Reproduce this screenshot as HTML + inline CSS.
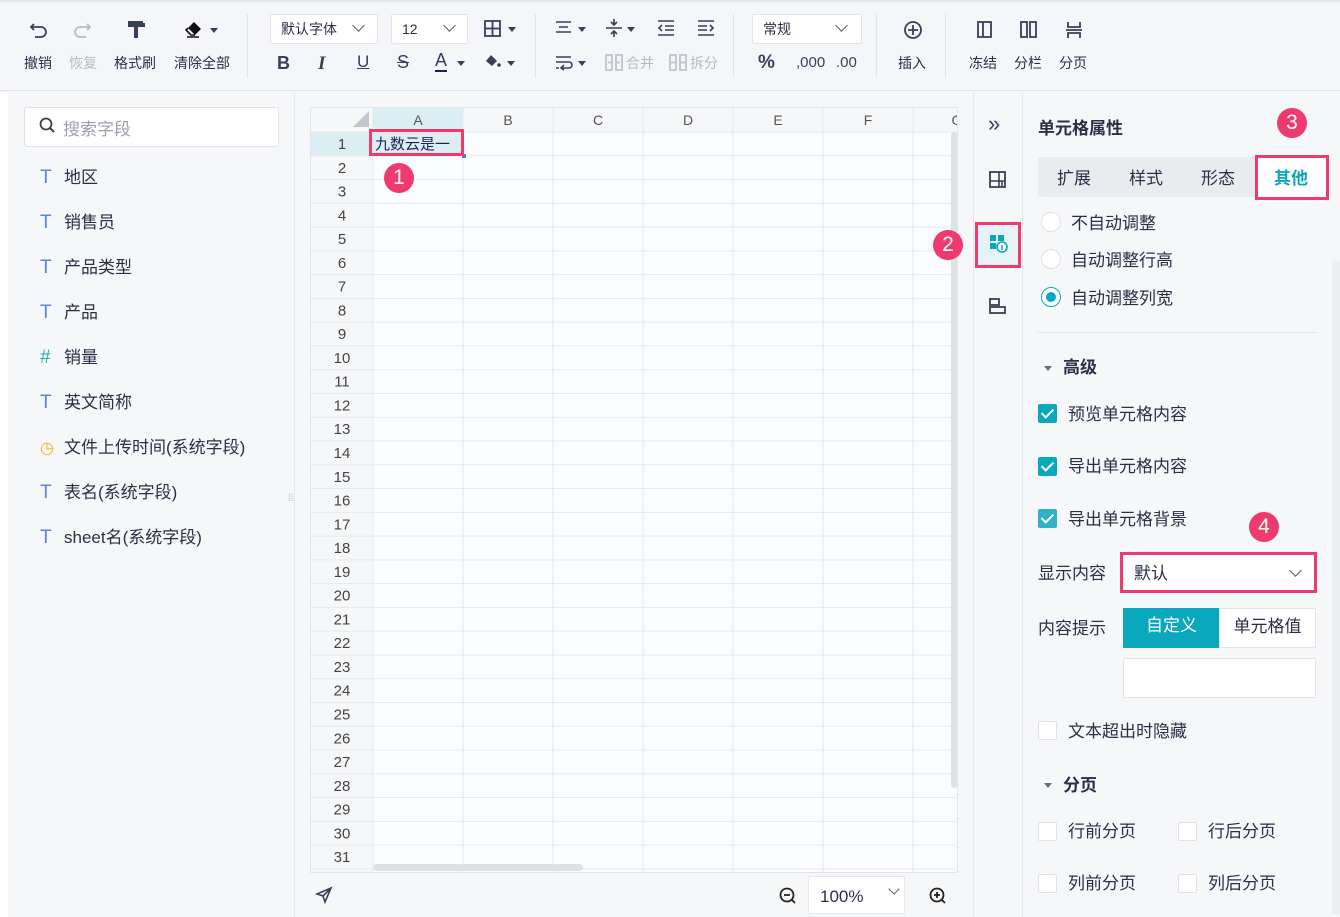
<!DOCTYPE html>
<html><head><meta charset="utf-8"><style>
*{box-sizing:border-box;margin:0;padding:0}
body{width:1340px;height:917px;position:relative;overflow:hidden;background:#f6f7f9;font-family:"Liberation Sans","Noto Sans CJK SC",sans-serif;color:#2b2f45;font-size:16px}
.a{position:absolute}
.tb{left:0;top:0;width:1340px;height:91px;background:#f5f6f9;border-top:2px solid #e6e7ea;border-bottom:1px solid #e2e4e8}
.lbl{font-size:14px;color:#2b2f45;position:absolute}
.sel{position:absolute;background:#fff;border:1px solid #e2e4e8;border-radius:2px;font-size:14px;padding:0 10px;line-height:28px}
.sep{position:absolute;width:1px;background:#e2e4e8;top:14px;height:64px}
.ic{position:absolute;font-size:16px;color:#3a3f58}
.chev{position:absolute;width:9px;height:9px;border-right:1.5px solid #555a70;border-bottom:1.5px solid #555a70;transform:rotate(45deg)}
.tri{position:absolute;width:0;height:0;border-left:4px solid transparent;border-right:4px solid transparent;border-top:5px solid #3a3f58}
.fld{position:absolute;left:40px;font-size:17px}
.fld b{font-weight:normal;color:#5b86d6;display:inline-block;width:24px;font-size:19px}
.badge{position:absolute;width:30px;height:30px;border-radius:50%;background:#ee3a6c;color:#fff;font-size:21px;text-align:center;line-height:30px}
.pink{position:absolute;border:3px solid #ee3a6c}
.cb{position:absolute;width:19px;height:19px;border-radius:2px;background:#fff;border:1px solid #dfe1e6}
.cb.on{background:#0aa8bd;border-color:#0aa8bd}
.cb.on:after{content:"";position:absolute;left:5px;top:1px;width:5px;height:10px;border-right:2px solid #fff;border-bottom:2px solid #fff;transform:rotate(45deg)}
.t{position:absolute;font-size:17px;color:#2b2f45}
.rd{position:absolute;width:20px;height:20px;border-radius:50%;background:#fff;border:1px solid #dfe1e6}
</style></head><body>
<div class="a tb"></div>
<svg class="a" style="left:28px;top:20px" width="22" height="20" viewBox="0 0 22 20"><path d="M6 4 L3 7 L6 10 M3 7 H13 a5 5 0 0 1 0 10 H7" fill="none" stroke="#3a3f58" stroke-width="1.8"/></svg>
<svg class="a" style="left:72px;top:20px" width="22" height="20" viewBox="0 0 22 20"><path d="M15 4 L18 7 L15 10 M18 7 H8 a5 5 0 0 0 0 10 H14" fill="none" stroke="#b7bac4" stroke-width="1.8"/></svg>
<svg class="a" style="left:126px;top:20px" width="20" height="20" viewBox="0 0 20 20"><rect x="2" y="1" width="15" height="6" fill="#3a3f58"/><rect x="17" y="3" width="2" height="4" fill="#3a3f58"/><rect x="8" y="7" width="4" height="2" fill="#3a3f58"/><rect x="8" y="9" width="4" height="9" fill="#3a3f58"/></svg>
<svg class="a" style="left:185px;top:20px" width="22" height="20" viewBox="0 0 22 20"><path d="M9 2 L16 9 L10 15 L3 8 Z" fill="#111"/><path d="M3 8 L1 10 L6 15 L10 15" fill="none" stroke="#111" stroke-width="1.6"/><line x1="2" y1="17" x2="14" y2="17" stroke="#111" stroke-width="1.5"/></svg>
<div class="tri" style="left:210px;top:28px"></div>
<div class="lbl" style="left:24px;top:53px">撤销</div>
<div class="lbl" style="left:69px;top:53px;color:#b7bac4">恢复</div>
<div class="lbl" style="left:114px;top:53px">格式刷</div>
<div class="lbl" style="left:174px;top:53px">清除全部</div>
<div class="sep" style="left:247px"></div>
<div class="sel" style="left:270px;top:14px;width:108px;height:30px">默认字体</div><div class="chev" style="left:354px;top:21px"></div>
<div class="sel" style="left:391px;top:14px;width:77px;height:30px">12</div><div class="chev" style="left:445px;top:21px"></div>
<svg class="a" style="left:484px;top:20px" width="18" height="18" viewBox="0 0 18 18"><rect x="1" y="1" width="15" height="15" fill="none" stroke="#3a3f58" stroke-width="1.8"/><line x1="8.5" y1="1" x2="8.5" y2="16" stroke="#3a3f58" stroke-width="1.8"/><line x1="1" y1="8.5" x2="16" y2="8.5" stroke="#3a3f58" stroke-width="1.8"/></svg><div class="tri" style="left:508px;top:27px"></div>
<div class="ic" style="left:277px;top:53px;font-size:18px;font-weight:bold">B</div>
<div class="ic" style="left:318px;top:53px;font-size:19px;font-style:italic;font-family:'Liberation Serif',serif;font-weight:bold">I</div>
<div class="ic" style="left:357px;top:52px;font-size:17px;text-decoration:underline">U</div>
<div class="ic" style="left:397px;top:52px;font-size:18px;text-decoration:line-through">S</div>
<div class="ic" style="left:435px;top:50px;font-size:18px;border-bottom:2px solid #1e2450;line-height:20px">A</div><div class="tri" style="left:457px;top:61px"></div>
<svg class="a" style="left:484px;top:53px" width="18" height="18" viewBox="0 0 18 18"><path d="M7 2 L13 8 L8 13 L2 8 Z" fill="#3a3f58"/><circle cx="15" cy="12" r="1.8" fill="#3a3f58"/></svg><div class="tri" style="left:507px;top:61px"></div>
<div class="sep" style="left:535px"></div>
<svg class="a" style="left:555px;top:20px" width="18" height="16"><path d="M1 2H16M4 7H13M1 12H16" stroke="#3a3f58" stroke-width="1.6"/></svg><div class="tri" style="left:578px;top:27px"></div>
<svg class="a" style="left:605px;top:18px" width="18" height="20"><path d="M1 10H17M9 1V7M6 4L9 7L12 4M9 19V13M6 16L9 13L12 16" stroke="#3a3f58" stroke-width="1.6" fill="none"/></svg><div class="tri" style="left:627px;top:27px"></div>
<svg class="a" style="left:657px;top:20px" width="18" height="16"><path d="M1 1H17M8 6H17M8 10H17M1 15H17M5 5L2 8L5 11" stroke="#3a3f58" stroke-width="1.6" fill="none"/></svg>
<svg class="a" style="left:697px;top:20px" width="18" height="16"><path d="M1 1H17M1 6H10M1 10H10M1 15H17M13 5L16 8L13 11" stroke="#3a3f58" stroke-width="1.6" fill="none"/></svg>
<svg class="a" style="left:555px;top:55px" width="18" height="16"><path d="M1 2H16M1 7H14a3 3 0 0 1 0 6H7M9 10L6 13L9 15M1 13H4" stroke="#3a3f58" stroke-width="1.6" fill="none"/></svg><div class="tri" style="left:578px;top:61px"></div>
<svg class="a" style="left:605px;top:54px" width="18" height="17"><path d="M1 1H7V16H1ZM11 1H17V16H11ZM3 8.5H6M12 8.5H15" fill="none" stroke="#c0c3cb" stroke-width="1.8"/></svg>
<div class="lbl" style="left:626px;top:53px;color:#b7bac4">合并</div>
<svg class="a" style="left:669px;top:54px" width="18" height="17"><path d="M1 1H7V16H1ZM11 1H17V16H11ZM1 8.5H7M11 8.5H17" fill="none" stroke="#c0c3cb" stroke-width="1.8"/></svg>
<div class="lbl" style="left:690px;top:53px;color:#b7bac4">拆分</div>
<div class="sep" style="left:733px"></div>
<div class="sel" style="left:752px;top:14px;width:110px;height:30px">常规</div><div class="chev" style="left:837px;top:21px"></div>
<div class="ic" style="left:758px;top:52px;font-size:19px;font-weight:bold">%</div>
<div class="ic" style="left:796px;top:54px;font-size:15px">,000</div>
<div class="ic" style="left:836px;top:54px;font-size:15px">.00</div>
<div class="sep" style="left:876px"></div>
<svg class="a" style="left:903px;top:20px" width="20" height="20"><circle cx="10" cy="10" r="8" fill="none" stroke="#3a3f58" stroke-width="1.8"/><path d="M10 5V15M5 10H15" stroke="#3a3f58" stroke-width="1.8"/></svg>
<div class="lbl" style="left:898px;top:53px">插入</div>
<div class="sep" style="left:945px"></div>
<svg class="a" style="left:977px;top:21px" width="16" height="18"><rect x="1" y="1" width="13" height="15" fill="none" stroke="#3a3f58" stroke-width="1.8"/><line x1="6" y1="1" x2="6" y2="16" stroke="#3a3f58" stroke-width="1.8"/></svg>
<svg class="a" style="left:1020px;top:21px" width="18" height="18"><rect x="1" y="1" width="6" height="15" fill="none" stroke="#3a3f58" stroke-width="1.8"/><rect x="10" y="1" width="6" height="15" fill="none" stroke="#3a3f58" stroke-width="1.8"/></svg>
<svg class="a" style="left:1065px;top:21px" width="18" height="18"><path d="M3 1V6H15V1M1 9H17M3 17V12H15V17" fill="none" stroke="#3a3f58" stroke-width="1.8"/></svg>
<div class="lbl" style="left:969px;top:53px">冻结</div>
<div class="lbl" style="left:1014px;top:53px">分栏</div>
<div class="lbl" style="left:1059px;top:53px">分页</div>

<div class="a" style="left:0;top:92px;width:8px;height:825px;background:#fff"></div>
<div class="a" style="left:294px;top:92px;width:1px;height:825px;background:#e6e7ea"></div>
<div class="a" style="left:24px;top:107px;width:255px;height:40px;background:#fff;border:1px solid #dfe1e6;border-radius:3px"></div>
<svg class="a" style="left:39px;top:117px" width="18" height="18"><circle cx="7" cy="7" r="5.5" fill="none" stroke="#3a3f58" stroke-width="1.8"/><line x1="11" y1="11" x2="15" y2="15" stroke="#3a3f58" stroke-width="2"/></svg>
<div class="a" style="left:63px;top:115px;font-size:17px;color:#9aa0ad">搜索字段</div>
<div class="fld" style="top:163px"><b>T</b>地区</div>
<div class="fld" style="top:208px"><b>T</b>销售员</div>
<div class="fld" style="top:253px"><b>T</b>产品类型</div>
<div class="fld" style="top:298px"><b>T</b>产品</div>
<div class="fld" style="top:343px"><b style="color:#1fb3a8">#</b>销量</div>
<div class="fld" style="top:388px"><b>T</b>英文简称</div>
<div class="fld" style="top:433px"><b style="color:#f0b400;font-size:16px">◷</b>文件上传时间(系统字段)</div>
<div class="fld" style="top:478px"><b>T</b>表名(系统字段)</div>
<div class="fld" style="top:523px"><b>T</b>sheet名(系统字段)</div>
<div class="a" style="left:288px;top:496px;color:#b0b3bd;font-size:10px;line-height:6px">⁞⁞</div>

<div class="a" style="left:310px;top:107px;width:648px;height:766px;background:#fbfcfe;border:1px solid #e3e5ea;overflow:hidden">
<svg width="648" height="766" style="position:absolute;left:0;top:0">
<rect x="0" y="0" width="648" height="24" fill="#f6f7f9"/>
<rect x="0" y="0" width="62" height="766" fill="#f6f7f9"/>
<rect x="62" y="0" width="90" height="24" fill="#daeef3"/>
<rect x="0" y="24" width="62" height="23.8" fill="#daeef3"/>
<rect x="62" y="24" width="90" height="23.8" fill="#daeef3"/>
<path d="M58 3 L58 19 L42 19 Z" fill="#c4c6cf"/>
<g stroke="#e6e8ec" stroke-width="1">
<line x1="62" y1="0" x2="62" y2="766"/><line x1="152" y1="0" x2="152" y2="766"/><line x1="242" y1="0" x2="242" y2="766"/><line x1="332" y1="0" x2="332" y2="766"/><line x1="422" y1="0" x2="422" y2="766"/><line x1="512" y1="0" x2="512" y2="766"/><line x1="602" y1="0" x2="602" y2="766"/>
</g>
<g stroke="#e6e8ec" stroke-width="1" id="hl"></g>
<rect x="640" y="24" width="6" height="656" rx="3" fill="#dfe1e5"/>
<rect x="62" y="756" width="210" height="7" rx="3.5" fill="#dfe1e5"/>
<rect x="151" y="46" width="4" height="4" fill="#3b82f6"/>
<g font-family="Liberation Sans" font-size="14" fill="#555" text-anchor="middle">
<text x="107" y="17">A</text><text x="197" y="17">B</text><text x="287" y="17">C</text><text x="377" y="17">D</text><text x="467" y="17">E</text><text x="557" y="17">F</text><text x="646" y="17">G</text>
</g>
<g id="rn" font-family="Liberation Sans" font-size="15" fill="#444" text-anchor="middle"></g>
<text x="64" y="41" font-family="Liberation Sans, Noto Sans CJK SC" font-size="15" fill="#1e2450">九数云是一</text>
</svg>
</div>
<script>
var hl=document.getElementById('hl'),rn=document.getElementById('rn'),s='',t='';
for(var i=0;i<=32;i++){var y=24+i*23.77;s+='<line x1="0" y1="'+y+'" x2="648" y2="'+y+'"/>';if(i<31)t+='<text x="31" y="'+(y+17)+'">'+(i+1)+'</text>';}
hl.innerHTML=s;rn.innerHTML=t;
</script>
<div class="pink" style="left:369px;top:129px;width:95px;height:27px"></div>
<div class="badge" style="left:384px;top:163px">1</div>
<svg class="a" style="left:315px;top:886px" width="18" height="18"><path d="M16 2 L2 8 L8 10 L10 16 Z M8 10 L16 2" fill="none" stroke="#3a3f58" stroke-width="1.6"/></svg>
<svg class="a" style="left:778px;top:886px" width="20" height="20"><circle cx="9" cy="9" r="6.5" fill="none" stroke="#222" stroke-width="1.8"/><path d="M6 9H12M14 14L17 17" stroke="#222" stroke-width="1.8"/></svg>
<div class="a" style="left:808px;top:876px;width:97px;height:38px;background:#fff;border:1px solid #e6e7ea;font-size:17px;padding:10px 0 0 11px">100%</div><div class="chev" style="left:890px;top:885px;width:8px;height:8px"></div>
<svg class="a" style="left:928px;top:886px" width="20" height="20"><circle cx="9" cy="9" r="6.5" fill="none" stroke="#222" stroke-width="1.8"/><path d="M6 9H12M9 6V12M14 14L17 17" stroke="#222" stroke-width="1.8"/></svg>

<div class="a" style="left:973px;top:92px;width:1px;height:825px;background:#e6e7ea"></div>
<div class="a" style="left:1022px;top:92px;width:1px;height:825px;background:#e6e7ea"></div>
<div class="a" style="left:988px;top:111px;font-size:22px;color:#3a3f58">»</div>
<svg class="a" style="left:989px;top:171px" width="18" height="18"><rect x="1" y="1" width="15" height="15" fill="none" stroke="#3a3f58" stroke-width="1.8"/><path d="M1 10H16M10 1V16M13 10V16" stroke="#3a3f58" stroke-width="1.6"/></svg>
<div class="a" style="left:976px;top:223px;width:44px;height:44px;background:#e6f3f6"></div>
<div class="pink" style="left:975px;top:222px;width:46px;height:46px"></div>
<svg class="a" style="left:989px;top:234px" width="20" height="20"><rect x="1" y="1" width="6" height="6" fill="#0aa8bd"/><rect x="9" y="1" width="6" height="6" fill="#0aa8bd"/><rect x="1" y="9" width="6" height="6" fill="#0aa8bd"/><circle cx="13" cy="13" r="5" fill="#fff" stroke="#0aa8bd" stroke-width="1.6"/><path d="M13 11V16" stroke="#0aa8bd" stroke-width="1.6"/></svg>
<div class="badge" style="left:933px;top:230px">2</div>
<svg class="a" style="left:989px;top:297px" width="18" height="18"><rect x="1" y="2" width="9" height="6" fill="none" stroke="#3a3f58" stroke-width="1.8"/><rect x="1" y="10" width="15" height="6" fill="none" stroke="#3a3f58" stroke-width="1.8"/></svg>

<div class="a" style="left:1332px;top:260px;width:8px;height:655px;background:#eceef1;border-radius:4px"></div>
<div class="t" style="left:1038px;top:114px;font-weight:bold">单元格属性</div>
<div class="badge" style="left:1277px;top:108px">3</div>
<div class="a" style="left:1038px;top:157px;width:290px;height:40px;background:#eaebef;border-radius:3px"></div>
<div class="t" style="left:1057px;top:164px">扩展</div>
<div class="t" style="left:1129px;top:164px">样式</div>
<div class="t" style="left:1201px;top:164px">形态</div>
<div class="a" style="left:1255px;top:155px;width:74px;height:45px;background:#fff;border:3px solid #ee3a6c"></div>
<div class="t" style="left:1274px;top:164px;color:#0aa8bd;font-weight:bold">其他</div>
<div class="rd" style="left:1041px;top:212px"></div><div class="t" style="left:1071px;top:209px">不自动调整</div>
<div class="rd" style="left:1041px;top:249px"></div><div class="t" style="left:1071px;top:246px">自动调整行高</div>
<div class="rd" style="left:1041px;top:287px;border-color:#0aa8bd"></div><div class="a" style="left:1046px;top:292px;width:10px;height:10px;border-radius:50%;background:#0aa8bd"></div><div class="t" style="left:1071px;top:284px">自动调整列宽</div>
<div class="a" style="left:1038px;top:332px;width:278px;height:1px;background:#e2e4e8"></div>
<div class="tri" style="left:1044px;top:366px;border-top-color:#6a6e80"></div><div class="t" style="left:1063px;top:353px;font-weight:bold">高级</div>
<div class="cb on" style="left:1038px;top:404px"></div><div class="t" style="left:1068px;top:400px">预览单元格内容</div>
<div class="cb on" style="left:1038px;top:457px"></div><div class="t" style="left:1068px;top:452px">导出单元格内容</div>
<div class="cb on" style="left:1038px;top:509px;opacity:.85"></div><div class="t" style="left:1068px;top:505px">导出单元格背景</div>
<div class="badge" style="left:1249px;top:512px">4</div>
<div class="t" style="left:1038px;top:559px">显示内容</div>
<div class="a" style="left:1120px;top:552px;width:197px;height:41px;background:#fff;border:3px solid #ee3a6c"></div>
<div class="t" style="left:1134px;top:559px">默认</div><div class="chev" style="left:1291px;top:566px"></div>
<div class="t" style="left:1038px;top:614px">内容提示</div>
<div class="a" style="left:1123px;top:608px;width:97px;height:40px;background:#0aa8bd;color:#fff;font-size:17px;text-align:center;line-height:36px">自定义</div>
<div class="a" style="left:1219px;top:608px;width:97px;height:40px;background:#fff;border:1px solid #e2e4e8;font-size:17px;text-align:center;line-height:36px">单元格值</div>
<div class="a" style="left:1123px;top:658px;width:193px;height:40px;background:#fff;border:1px solid #e2e4e8;border-radius:2px"></div>
<div class="cb" style="left:1038px;top:721px"></div><div class="t" style="left:1068px;top:717px">文本超出时隐藏</div>
<div class="tri" style="left:1044px;top:783px;border-top-color:#6a6e80"></div><div class="t" style="left:1063px;top:771px;font-weight:bold">分页</div>
<div class="cb" style="left:1038px;top:822px"></div><div class="t" style="left:1068px;top:817px">行前分页</div>
<div class="cb" style="left:1178px;top:822px"></div><div class="t" style="left:1208px;top:817px">行后分页</div>
<div class="cb" style="left:1038px;top:874px"></div><div class="t" style="left:1068px;top:869px">列前分页</div>
<div class="cb" style="left:1178px;top:874px"></div><div class="t" style="left:1208px;top:869px">列后分页</div>
</body></html>
